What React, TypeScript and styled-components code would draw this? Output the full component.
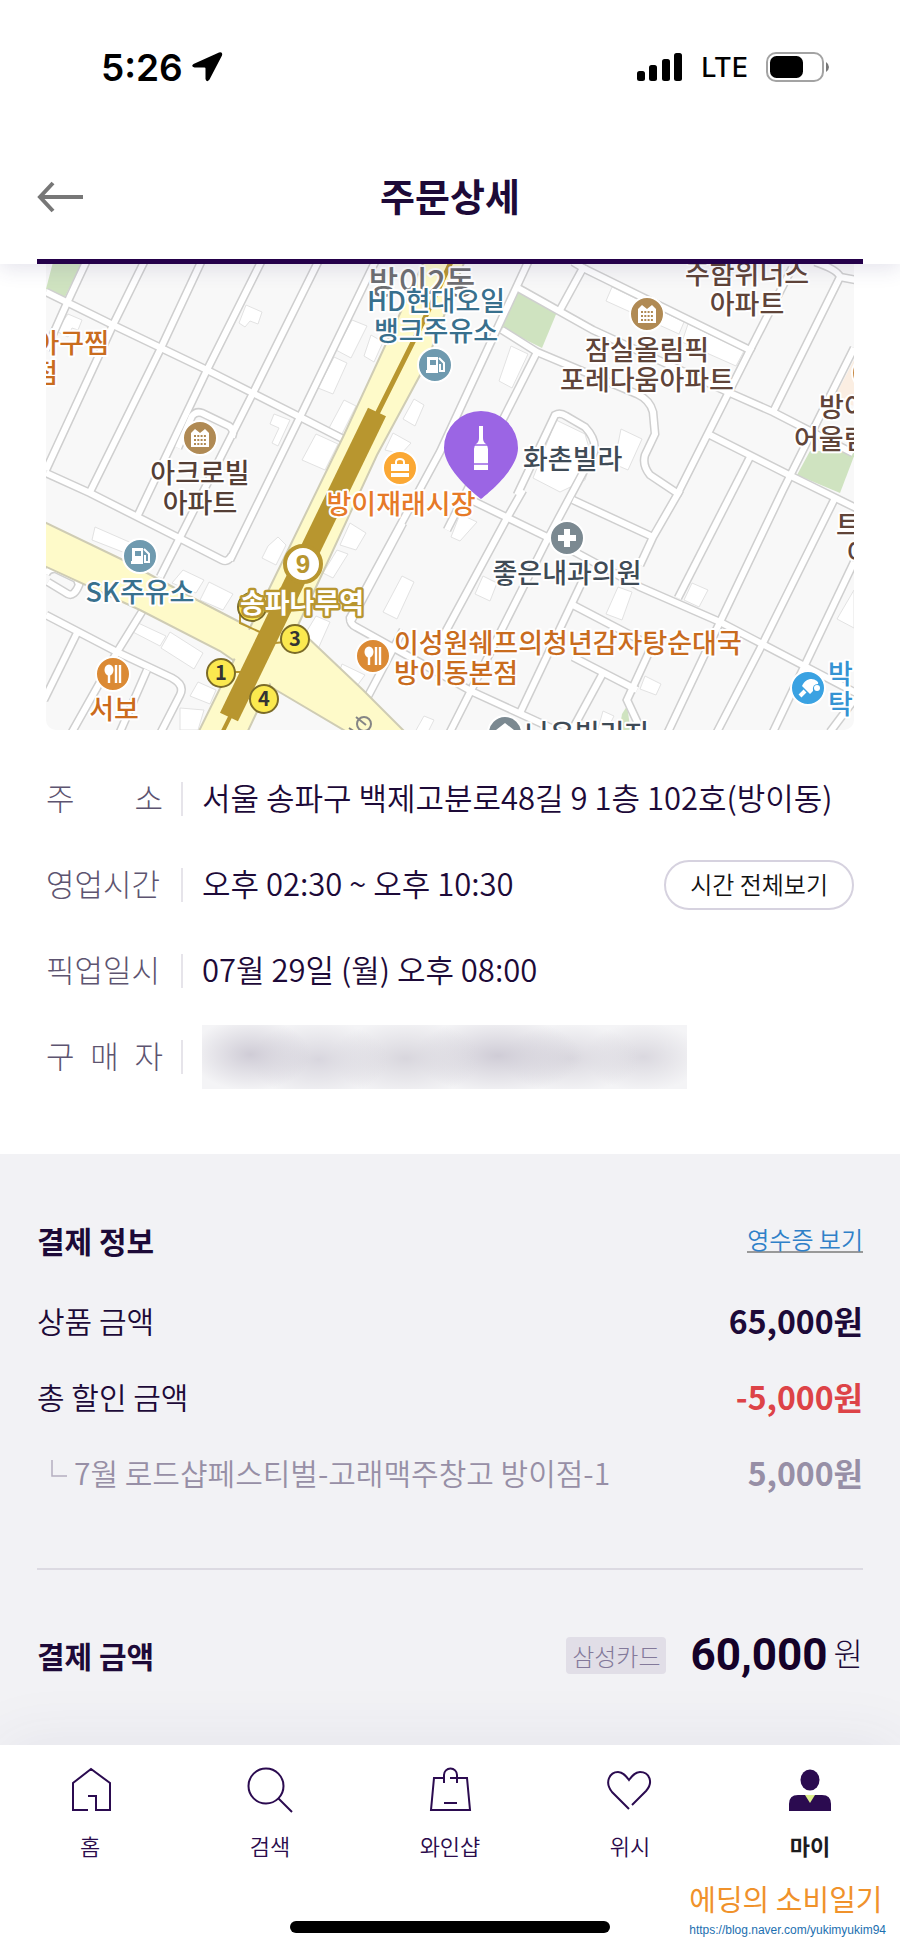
import { JSX, ReactNode } from 'react';
import styled, { createGlobalStyle } from 'styled-components';

const GlobalStyle = createGlobalStyle`
  * {
    box-sizing: border-box;
  }

  body {
    margin: 0;
    background: #fff;
    color: #1d0a38;
    font-family: 'Noto Sans CJK KR', 'Noto Sans', sans-serif;
  }

  h1, h2, p, dl, dt, dd {
    margin: 0;
  }
`;

const Page = styled.div`
  position: relative;
  display: flex;
  flex-direction: column;
  min-height: 100vh;
`;

const TopBar = styled.header`
  position: relative;
  z-index: 2;
  background: #fff;
  box-shadow: 0 4px 20px rgba(60, 50, 110, 0.14);
`;

const StatusBar = styled.div`
  display: flex;
  align-items: center;
  justify-content: space-between;
  height: 134px;
  padding: 0 71px 0 101px;
  font-family: Inter, sans-serif;
  color: #000;
`;

const StatusGroup = styled.div<{ $gap: number }>`
  display: flex;
  align-items: center;
  gap: ${(props) => props.$gap}px;
`;

const Clock = styled.span`
  font-size: 37px;
  font-weight: 600;
`;

const Network = styled.span`
  font-size: 27px;
  font-weight: 500;
`;

const TitleBar = styled.div`
  display: grid;
  grid-template-columns: 48px 1fr 48px;
  align-items: center;
  height: 130px;
  margin: 0 37px;
  border-bottom: 5px solid #24004a;
`;

const BackButton = styled.button`
  display: flex;
  padding: 0;
  border: 0;
  background: none;
  cursor: pointer;
`;

const Title = styled.h1`
  padding-bottom: 4px;
  font-size: 38px;
  line-height: 48px;
  font-weight: 700;
  text-align: center;
`;

const Store = styled.section`
  padding: 0 46px 54px;
`;

const Map = styled.svg`
  display: block;
  width: 100%;
  height: auto;
  border-radius: 0 0 10px 10px;
`;

const MapLabel = styled.text<{ $large?: boolean }>`
  font-size: ${(props) => (props.$large ? 32 : 27)}px;
  font-weight: 500;
  stroke: #fff;
  stroke-width: 4px;
  stroke-linejoin: round;
  paint-order: stroke;
`;

const InfoList = styled.dl`
  padding-top: 26px;
`;

const InfoRow = styled.div`
  display: flex;
  align-items: center;
  min-height: 86px;
  font-size: 31px;
  line-height: 40px;
`;

const InfoLabel = styled.dt`
  width: 117px;
  padding-bottom: 5px;
  font-weight: 300;
  color: #5d5470;
  text-align-last: justify;
`;

const InfoValue = styled.dd`
  display: flex;
  flex: 1;
  align-items: center;
  font-weight: 350;

  &::before {
    content: '';
    width: 2px;
    height: 34px;
    margin: 0 19px 0 18px;
    background: #e6e4ea;
  }
`;

const InfoText = styled.span`
  flex: 1;
  padding-bottom: 5px;
`;

const HoursButton = styled.button`
  height: 50px;
  padding: 0 24px 2px;
  border: 2px solid #d6d2df;
  border-radius: 25px;
  background: #fff;
  font: inherit;
  font-size: 24px;
  line-height: 32px;
  color: #111;
  cursor: pointer;
`;

const Masked = styled.span`
  width: 485px;
  height: 64px;
  background:
    radial-gradient(ellipse 60px 36px at 10% 46%, #cfccd6, transparent),
    radial-gradient(ellipse 70px 38px at 24% 54%, #d8d6de, transparent),
    radial-gradient(ellipse 76px 38px at 42% 52%, #d8d6dd, transparent),
    radial-gradient(ellipse 84px 38px at 61% 48%, #cfccd6, transparent),
    radial-gradient(ellipse 70px 34px at 76% 52%, #dad8df, transparent),
    radial-gradient(ellipse 60px 34px at 91% 50%, #dad8df, transparent),
    #f4f4f6;
`;

const Payment = styled.section`
  flex: 1;
  padding: 44px 37px 40px;
  background: #f2f2f5;
`;

const PaymentRow = styled.div<{ $height?: number }>`
  display: flex;
  align-items: center;
  justify-content: space-between;
  height: ${(props) => props.$height || 76}px;
  font-size: 30px;
  line-height: 40px;
  font-weight: 350;
`;

const SectionTitle = styled.h2`
  font-size: 30px;
  line-height: 40px;
  font-weight: 700;
`;

const ReceiptLink = styled.a`
  border-bottom: 2px solid #999;
  font-size: 24px;
  line-height: 24px;
  color: #2f80c8;
  text-decoration: none;
`;

const Amount = styled.span<{ $color?: string }>`
  font-size: 32px;
  font-weight: 700;
  color: ${(props) => props.$color || '#1d0a38'};
`;

const Coupon = styled.span`
  display: flex;
  align-items: center;
  gap: 7px;
  padding-left: 14px;
  color: #978fa6;
`;

const Divider = styled.hr`
  height: 2px;
  margin: 58px 0 47px;
  border: 0;
  background: #dcdae2;
`;

const Total = styled.div`
  display: flex;
  align-items: center;
`;

const Card = styled.span`
  margin-right: 24px;
  padding: 2px 6px;
  border-radius: 4px;
  background: #e1dee7;
  font-size: 24px;
  line-height: 33px;
  font-weight: 300;
  color: #83799a;
`;

const TotalAmount = styled.strong`
  font-family: Roboto, sans-serif;
  font-size: 44px;
  line-height: 52px;
  color: #150229;
`;

const Won = styled.span`
  margin-left: 6px;
  padding-bottom: 6px;
  font-size: 32px;
  font-weight: 300;
`;

const TabBar = styled.footer`
  position: relative;
  z-index: 1;
  display: flex;
  flex-direction: column;
  justify-content: space-between;
  align-items: center;
  height: 206px;
  padding-bottom: 18px;
  background: #fff;
  box-shadow: 0 -4px 60px rgba(60, 50, 110, 0.07);
`;

const Tabs = styled.nav`
  display: grid;
  grid-template-columns: repeat(5, 1fr);
  width: 100%;
  padding-top: 22px;
`;

const Tab = styled.a<{ $active?: boolean }>`
  display: flex;
  flex-direction: column;
  align-items: center;
  gap: 14px;
  font-size: 22px;
  line-height: 32px;
  font-weight: ${(props) => (props.$active ? 700 : 350)};
  color: ${(props) => (props.$active ? '#1c1c1e' : '#2a0b4c')};
  text-decoration: none;
`;

const HomeIndicator = styled.div`
  width: 320px;
  height: 12px;
  border-radius: 6px;
  background: #000;
`;

const Watermark = styled.p`
  position: absolute;
  z-index: 3;
  right: 14px;
  bottom: 11px;
  display: flex;
  flex-direction: column;
  font-size: 29px;
  line-height: 44px;
  color: #f0922b;

  a {
    font-family: 'Liberation Sans', sans-serif;
    font-size: 12px;
    line-height: 20px;
    color: #1c6fb0;
    text-decoration: none;
  }
`;

const streets = [
  'M46 292 L113 325 L207 370 L300 417 L345 440',
  'M87 260 L67 303 L46 350',
  'M145 260 L113 325 L46 470',
  'M202 260 L160 350 L90 492',
  'M262 260 L207 370 L137 517',
  'M319 260 L253 393 L160 577',
  'M376 260 L300 417 L230 560',
  'M178 448 L192 416 Q196 411 202 413 L229 426 Q235 430 232 437',
  'M46 473 L90 493 L183 540 L222 560 Q228 563 232 555',
  'M46 615 L117 652 L172 678 Q185 685 180 695 L161 732',
  'M77 633 L44 700',
  'M143 610 L117 652 L72 732',
  'M147 670 L120 732',
  'M48 582 L68 594 Q74 597 79 585 L77 579 L56 569 Q49 568 46 574',
  'M529 260 L440 452 L350 618 Q350 624 356 627 L473 692 L560 732',
  'M583 268 L750 350 L677 495',
  'M573 262 L583 268 L560 310',
  'M518 288 L593 330 L730 393 L773 412 L853 453',
  'M502 330 L537 352 L637 394 Q650 400 653 412 L655 434 L645 455 Q642 465 650 475 L680 495',
  'M537 352 L447 530',
  'M792 268 L750 350',
  'M815 262 Q838 270 840 277 L773 412',
  'M840 277 L856 280',
  'M854 348 L783 490 L720 622 L668 732',
  'M710 435 L793 477 L856 508',
  'M750 457 L678 598',
  'M517 495 L555 415 Q560 412 566 416 L585 427 Q597 440 594 452 L547 540 L450 732',
  'M467 498 L547 537 L640 587 L720 622 L856 693',
  'M523 490 L507 518 L440 642',
  'M403 523 L350 623',
  'M573 500 L653 537',
  'M680 490 L653 537 L640 565',
  'M835 498 L762 645 L717 732',
  'M854 562 L773 732',
  'M573 605 L640 640',
  'M583 580 L520 713',
  'M573 657 L637 690',
  'M603 673 L571 732',
  'M650 650 L627 700 L642 732',
  'M366 700 L403 630',
  'M854 700 L830 732',
];

const buildings = [
  'M68 314 L82 320 L78 330 L72 328 L68 337 L56 331Z',
  'M246 305 L262 312 L258 324 L250 321 L245 327 L239 323Z',
  'M352 320 L367 326 L351 358 L336 350Z',
  'M334 357 L347 363 L333 394 L318 388Z',
  'M371 335 L383 342 L374 362 L364 356Z',
  'M344 400 L356 406 L342 434 L329 428Z',
  'M274 414 L290 420 L278 446 L272 443 L279 428 L270 424Z',
  'M316 434 L338 444 L325 470 L302 460Z',
  'M414 399 L424 405 L415 426 L403 419Z',
  'M393 433 L411 443 L401 454 L385 450Z',
  'M95 527 L143 548 L138 558 L92 540Z',
  'M183 570 L204 580 L196 593 L172 583Z',
  'M209 582 L233 594 L223 610 L200 600Z',
  'M278 537 L286 545 L276 565 L262 558 L268 546Z',
  'M350 523 L366 533 L356 550 L340 545Z',
  'M337 550 L348 554 L333 578 L323 573Z',
  'M402 576 L414 582 L397 619 L383 612Z',
  'M316 616 L330 622 L314 658 L296 649Z',
  'M170 632 L203 653 L194 669 L161 648Z',
  'M136 622 L166 636 L160 646 L131 631Z',
  'M342 664 L365 675 L351 694 L335 685Z',
  'M198 682 L216 690 L210 704 L190 696Z',
  'M180 708 L204 710 L198 730 L180 730Z',
  'M612 287 L684 322 L679 334 L606 301Z',
  'M688 324 L744 351 L736 366 L682 342Z',
  'M511 346 L528 354 L512 388 L499 381Z',
  'M556 420 L585 434 L592 458 L585 480 L560 492 L533 478Z',
  'M621 429 L642 439 L628 470 L614 464Z',
  'M460 514 L477 522 L460 541 L451 537Z',
  'M483 576 L497 583 L490 601 L475 594Z',
  'M618 587 L632 592 L622 620 L606 614Z',
  'M692 583 L708 590 L699 607 L684 600Z',
  'M645 676 L661 684 L656 695 L640 689Z',
  'M603 711 L614 716 L606 732 L597 732Z',
  'M854 590 L837 619 L854 628Z',
  'M424 716 L434 720 L428 732 L415 732Z',
];

const labels = [
  { x: 422, y: 294, fill: '#6f6f72', anchor: 'middle', lines: ['방이2동'], large: true },
  { x: 436, y: 311, fill: '#38708d', anchor: 'middle', lines: ['HD현대오일', '뱅크주유소'] },
  { x: 109, y: 353, fill: '#c96c1e', anchor: 'end', lines: ['아구찜'] },
  { x: 58, y: 383, fill: '#c96c1e', anchor: 'end', lines: ['점'] },
  { x: 200, y: 483, fill: '#553f36', anchor: 'middle', lines: ['아크로빌', '아파트'] },
  { x: 140, y: 602, fill: '#38708d', anchor: 'middle', lines: ['SK주유소'] },
  { x: 114, y: 719, fill: '#cb6b1c', anchor: 'middle', lines: ['서보'] },
  { x: 401, y: 514, fill: '#e67a28', anchor: 'middle', lines: ['방이재래시장'] },
  { x: 747, y: 284, fill: '#604439', anchor: 'middle', lines: ['주함위너스', '아파트'] },
  { x: 647, y: 360, fill: '#604439', anchor: 'middle', lines: ['잠실올림픽', '포레다움아파트'] },
  { x: 523, y: 469, fill: '#3f4b56', anchor: 'start', lines: ['화촌빌라'] },
  { x: 567, y: 583, fill: '#3f4b56', anchor: 'middle', lines: ['좋은내과의원'] },
  { x: 394, y: 653, fill: '#c96c1e', anchor: 'start', lines: ['이성원쉐프의청년감자탕순대국', '방이동본점'] },
  { x: 819, y: 417, fill: '#604439', anchor: 'start', lines: ['방이'] },
  { x: 794, y: 449, fill: '#604439', anchor: 'start', lines: ['어울림'] },
  { x: 836, y: 535, fill: '#604439', anchor: 'start', lines: ['트'] },
  { x: 847, y: 563, fill: '#604439', anchor: 'start', lines: ['아'] },
  { x: 828, y: 684, fill: '#3593d3', anchor: 'start', lines: ['박', '탁'] },
  { x: 525, y: 744, fill: '#3f4b56', anchor: 'start', lines: ['나우빌리지'] },
];

const exits = [
  { x: 252, y: 607, name: '' },
  { x: 221, y: 673, name: '1' },
  { x: 295, y: 639, name: '3' },
  { x: 264, y: 699, name: '4' },
];

interface PoiProps {
  x: number;
  y: number;
  color: string;
  children: ReactNode;
}

const Poi = ({ x, y, color, children }: PoiProps): JSX.Element => (
  <g transform={`translate(${x} ${y})`} fill="#fff">
    <circle r="17" fill={color} stroke="#fff" strokeWidth="2" />
    {children}
  </g>
);

const GasGlyph = (): JSX.Element => (
  <>
    <path d="M-8 -8h11v16h-12v-3h1zM-5 -5v5h6v-5z" fillRule="evenodd" />
    <path d="M4 -7l5 5v8h-4v-7" fill="none" stroke="#fff" strokeWidth="2" />
  </>
);

const AptGlyph = (): JSX.Element => (
  <>
    <path d="M-9 9v-14l4 -4l5 4l5 -4l4 4v14z" />
    <path d="M-6 -2h12M-6 2h12M-6 6h12" stroke="#b08a54" strokeWidth="2" strokeDasharray="2 1.3" />
  </>
);

const FoodGlyph = (): JSX.Element => (
  <>
    <ellipse cx="-4" cy="-4" rx="4.5" ry="5.5" />
    <path d="M-4 0v9M3 -9v18M7 -9v18" stroke="#fff" strokeWidth="2.4" />
  </>
);

const StoreMap = (): JSX.Element => (
  <Map viewBox="46 264 808 466" role="img" aria-label="매장 위치">
    <rect x="46" y="264" width="808" height="466" fill="#f8f8f8" />
    <g fill="#cfe3c0">
      <path d="M53 262h29l-17 35l-19 -8z" />
      <path d="M518 290l39 22l-15 36l-42 -21z" />
      <path d="M810 451h46l-16 42l-43 -18z" />
      <path d="M622 714l5 -8l4 26h-12z" />
    </g>
    <path d="M854 360l-20 38l20 8z" fill="#fbeee2" />
    {buildings.map((d) => (
      <path key={d} d={d} fill="#fff" stroke="#e2e2e2" />
    ))}
    <g fill="none" stroke="#cfcfcf" strokeWidth="9">
      {streets.map((d) => <path key={d} d={d} />)}
    </g>
    <g fill="none" stroke="#fff" strokeWidth="6">
      {streets.map((d) => <path key={d} d={d} />)}
    </g>

    <g fill="#fefac9" stroke="#cfccb4" strokeWidth="2">
      <path d="M40 520 L123 560 L197 600 L255 630 L305 635 L363 690 L405 732 L347 732 L276 690 L220 651 L140 610 L40 564Z" />
      <path d="M427 255 L343 437 L270 587 L197 735 L246 735 L317 585 L377 455 L425 366 L467 255Z" />
    </g>
    <path d="M41 524 L198 602 L255 633 L305 638 L362 692 L398 730 L350 730 L277 688 L221 649 L140 608 L41 562Z" fill="#fefac9" />

    <g fill="none" stroke="#b8962f">
      <path d="M240 615v8l22 10M275 643l20 -2M232 672h10" strokeWidth="2" />
      <path d="M452 260 L423 322 L375 418" strokeWidth="5" />
      <path d="M377 412 L229 717" strokeWidth="20" />
      <path d="M231 715 L221 735" strokeWidth="4" />
    </g>

    {exits.map(({ x, y, name }) => (
      <g key={name}>
        <circle cx={x} cy={y} r="14" fill="#fbe94f" stroke="#7b6b28" strokeWidth="2" />
        {name && (
          <text x={x} y={y + 7} textAnchor="middle" fontSize="20" fontWeight="700" fill="#333">{name}</text>
        )}
      </g>
    ))}

    <circle cx="303" cy="564" r="18" fill="#fff" stroke="#b8962f" strokeWidth="4" />
    <text x="303" y="573" textAnchor="middle" fontFamily="Liberation Sans" fontSize="26" fontWeight="700" fill="#b8962f">9</text>
    <text
      x="302" y="613" textAnchor="middle" fontSize="27" fontWeight="700"
      fill="#fff" stroke="#b8962f" strokeWidth="5" strokeLinejoin="round" paintOrder="stroke"
    >송파나루역</text>

    {labels.map(({ x, y, fill, anchor, lines, large }) => (
      <MapLabel key={lines[0]} x={x} y={y} fill={fill} textAnchor={anchor} $large={large}>
        {lines.map((line, i) => (
          <tspan key={line} x={x} dy={i * 30}>{line}</tspan>
        ))}
      </MapLabel>
    ))}
    <g fill="none" stroke="#858585" strokeWidth="2">
      <circle cx="364" cy="724" r="7" />
      <path d="M349 728l9 6M356 717l10 8" />
    </g>

    <Poi x={435} y={365} color="#6f9aaf"><GasGlyph /></Poi>
    <Poi x={140} y={556} color="#6f9aaf"><GasGlyph /></Poi>
    <Poi x={200} y={438} color="#b08a54"><AptGlyph /></Poi>
    <Poi x={647} y={314} color="#b08a54"><AptGlyph /></Poi>
    <Poi x={869} y={373} color="#c98a45"><AptGlyph /></Poi>
    <Poi x={113} y={674} color="#db8a35"><FoodGlyph /></Poi>
    <Poi x={373} y={656} color="#db8a35"><FoodGlyph /></Poi>
    <Poi x={400} y={468} color="#fba834">
      <path d="M-9 -4h18v7h-18zM-9 5h18v4h-18z" />
      <path d="M-4 -4v-2a4 3 0 0 1 8 0v2" fill="none" stroke="#fff" strokeWidth="2" />
    </Poi>
    <Poi x={567} y={538} color="#7b8991"><path d="M-3 -9h6v6h6v6h-6v6h-6v-6h-6v-6h6z" /></Poi>
    <Poi x={505} y={733} color="#7b8991"><path d="M0 -10l9 7h-3v8h-12v-8h-3z" /></Poi>
    <Poi x={808} y={688} color="#3aa2e2">
      <path d="M-6 -2C-3 -9 4 -11 9 -7Q11 -5 10 -4Q4 -4 5 3L2 6Z" />
      <path d="M-3 3l-5 5" stroke="#fff" strokeWidth="4" />
      <circle cx="9" cy="0" r="3" />
    </Poi>

    <path d="M481 499c-5 -4 -37 -29 -37 -51a37 37 0 0 1 74 0c0 22 -32 47 -37 51z" fill="#9b65e4" />
    <path d="M479 426h4v12q0 4 3 6q2 2 2 5v21h-14v-21q0 -3 2 -5q3 -2 3 -6z" fill="#fff" />
    <path d="M473 445h16M473 464h16" stroke="#9b65e4" strokeWidth="1.5" />
  </Map>
);

const tabs = [
  {
    name: '홈',
    icon: <path d="M22 43H7V16L25 2l19 14v27H30V29h-8" />,
  },
  {
    name: '검색',
    icon: <><circle cx="20" cy="19" r="17.5" /><path d="M32 31l14 14" /></>,
  },
  {
    name: '와인샵',
    icon: <path d="M18 11H8L5 43h39l-3 -32H24M18 16V8a6.5 6.5 0 0 1 13 0v8M18 36h13" />,
  },
  {
    name: '위시',
    icon: <path d="M23 42L6 25C-2 15 4 5 12 5c5 0 8 4 11 8c3 -4 6 -8 11 -8c9 0 14 10 6 19L26 38" />,
  },
  {
    name: '마이',
    active: true,
    icon: (
      <g stroke="none">
        <ellipse cx="24" cy="13" rx="9.5" ry="10.5" fill="#2b0b50" />
        <path d="M3 44V37q0 -9 9 -9h24q9 0 9 9v7z" fill="#2b0b50" />
        <path d="M19 28h10l-5 8z" fill="#dcef8b" />
      </g>
    ),
  },
];

const App = (): JSX.Element => {
  return (
    <Page>
      <GlobalStyle />
      <TopBar>
        <StatusBar>
          <StatusGroup $gap={8}>
            <Clock>5:26</Clock>
            <svg width="32" height="32" viewBox="0 0 32 32">
              <path d="M28 1.500L2.500 13q-3 2.500 1 3.500h10q1 0 1 1v10.500q1 4 4 .5L31 4.500q1 -4 -3 -3z" fill="#000" />
            </svg>
          </StatusGroup>
          <StatusGroup $gap={18}>
            <svg width="46" height="28" viewBox="0 0 46 28">
              <rect x="0" y="18" width="8" height="10" rx="2.5" />
              <rect x="12" y="12" width="8" height="16" rx="2.5" />
              <rect x="25" y="6" width="8" height="22" rx="2.5" />
              <rect x="37" y="0" width="8" height="28" rx="2.5" />
            </svg>
            <Network>LTE</Network>
            <svg width="63" height="30" viewBox="0 0 63 30">
              <rect x="1" y="1" width="56" height="28" rx="9" fill="none" stroke="#a3a3a3" strokeWidth="2" />
              <rect x="4" y="4" width="33" height="22" rx="6.5" />
              <path d="M60 10v10q3 -2 3 -5t-3 -5z" fill="#777" />
            </svg>
          </StatusGroup>
        </StatusBar>
        <TitleBar>
          <BackButton aria-label="뒤로">
            <svg width="47" height="32" viewBox="0 0 47 32" fill="none" stroke="#777" strokeWidth="4">
              <path d="M16 2L3 16l13 14M3 16h43" />
            </svg>
          </BackButton>
          <Title>주문상세</Title>
        </TitleBar>
      </TopBar>

      <Store>
        <StoreMap />
        <InfoList>
          <InfoRow>
            <InfoLabel>주 소</InfoLabel>
            <InfoValue><InfoText>서울 송파구 백제고분로48길 9 1층 102호(방이동)</InfoText></InfoValue>
          </InfoRow>
          <InfoRow>
            <InfoLabel>영업시간</InfoLabel>
            <InfoValue>
              <InfoText>오후 02:30 ~ 오후 10:30</InfoText>
              <HoursButton>시간 전체보기</HoursButton>
            </InfoValue>
          </InfoRow>
          <InfoRow>
            <InfoLabel>픽업일시</InfoLabel>
            <InfoValue><InfoText>07월 29일 (월) 오후 08:00</InfoText></InfoValue>
          </InfoRow>
          <InfoRow>
            <InfoLabel>구 매 자</InfoLabel>
            <InfoValue><Masked /></InfoValue>
          </InfoRow>
        </InfoList>
      </Store>

      <Payment>
        <PaymentRow $height={84}>
          <SectionTitle>결제 정보</SectionTitle>
          <ReceiptLink href="#receipt">영수증 보기</ReceiptLink>
        </PaymentRow>
        <PaymentRow>
          <span>상품 금액</span>
          <Amount>65,000원</Amount>
        </PaymentRow>
        <PaymentRow>
          <span>총 할인 금액</span>
          <Amount $color="#dd4347">-5,000원</Amount>
        </PaymentRow>
        <PaymentRow>
          <Coupon>
            <svg width="16" height="28" viewBox="0 0 16 28" fill="none" stroke="#b5afc0" strokeWidth="1.5">
              <path d="M1 2v16h15" />
            </svg>
            7월 로드샵페스티벌-고래맥주창고 방이점-1
          </Coupon>
          <Amount $color="#978fa6">5,000원</Amount>
        </PaymentRow>
        <Divider />
        <PaymentRow>
          <SectionTitle>결제 금액</SectionTitle>
          <Total>
            <Card>삼성카드</Card>
            <TotalAmount>60,000</TotalAmount>
            <Won>원</Won>
          </Total>
        </PaymentRow>
      </Payment>

      <TabBar>
        <Tabs>
          {tabs.map(({ name, icon, active }) => (
            <Tab key={name} href="#tab" $active={active}>
              <svg width="48" height="48" viewBox="0 0 48 48" fill="none" stroke="#2b0b50" strokeWidth="2">
                {icon}
              </svg>
              {name}
            </Tab>
          ))}
        </Tabs>
        <HomeIndicator />
      </TabBar>

      <Watermark>
        에딩의 소비일기
        <a href="https://blog.naver.com/yukimyukim94">https://blog.naver.com/yukimyukim94</a>
      </Watermark>
    </Page>
  );
};

export default App;
